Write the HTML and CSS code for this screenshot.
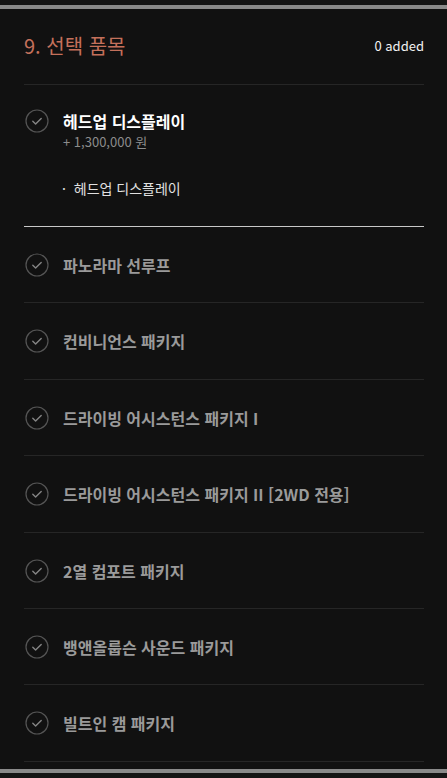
FILE: index.html
```html
<!DOCTYPE html>
<html lang="ko">
<head>
<meta charset="utf-8">
<link rel="stylesheet" href="styles.css">
</head>
<body>
<div class="page">
  <div class="bar-top"></div>
  <section class="panel">
    <header class="head">
      <h2 class="title">9. 선택 품목</h2>
      <span class="count">0 added</span>
    </header>
    <ul class="list">
      <li class="item open">
        <div class="row">
          <svg class="check" viewBox="0 0 24 24"><circle cx="12" cy="12" r="11" /><path d="M7.8 12.2l2.8 2.8 5.6-5.6" /></svg>
          <div class="info">
            <div class="name">헤드업 디스플레이</div>
            <div class="price">+ 1,300,000 원</div>
          </div>
        </div>
        <div class="sub">·&nbsp; 헤드업 디스플레이</div>
      </li>
      <li class="item">
        <div class="row"><svg class="check" viewBox="0 0 24 24"><circle cx="12" cy="12" r="11" /><path d="M7.8 12.2l2.8 2.8 5.6-5.6" /></svg><div class="name dim">파노라마 선루프</div></div>
      </li>
      <li class="item">
        <div class="row"><svg class="check" viewBox="0 0 24 24"><circle cx="12" cy="12" r="11" /><path d="M7.8 12.2l2.8 2.8 5.6-5.6" /></svg><div class="name dim">컨비니언스 패키지</div></div>
      </li>
      <li class="item">
        <div class="row"><svg class="check" viewBox="0 0 24 24"><circle cx="12" cy="12" r="11" /><path d="M7.8 12.2l2.8 2.8 5.6-5.6" /></svg><div class="name dim">드라이빙 어시스턴스 패키지 I</div></div>
      </li>
      <li class="item">
        <div class="row"><svg class="check" viewBox="0 0 24 24"><circle cx="12" cy="12" r="11" /><path d="M7.8 12.2l2.8 2.8 5.6-5.6" /></svg><div class="name dim">드라이빙 어시스턴스 패키지 II [2WD 전용]</div></div>
      </li>
      <li class="item">
        <div class="row"><svg class="check" viewBox="0 0 24 24"><circle cx="12" cy="12" r="11" /><path d="M7.8 12.2l2.8 2.8 5.6-5.6" /></svg><div class="name dim">2열 컴포트 패키지</div></div>
      </li>
      <li class="item">
        <div class="row"><svg class="check" viewBox="0 0 24 24"><circle cx="12" cy="12" r="11" /><path d="M7.8 12.2l2.8 2.8 5.6-5.6" /></svg><div class="name dim">뱅앤올룹슨 사운드 패키지</div></div>
      </li>
      <li class="item">
        <div class="row"><svg class="check" viewBox="0 0 24 24"><circle cx="12" cy="12" r="11" /><path d="M7.8 12.2l2.8 2.8 5.6-5.6" /></svg><div class="name dim">빌트인 캠 패키지</div></div>
      </li>
    </ul>
  </section>
  <div class="bar-bottom"></div>
</div>
</body>
</html>
```

FILE: styles.css
```css
* { box-sizing: border-box; }
html, body {
  margin: 0;
  padding: 0;
  background: #141414;
}
body {
  font-family: "Noto Sans CJK KR", "Noto Sans", sans-serif;
  color: #fff;
}
.page {
  width: 447px;
  height: 778px;
  overflow: hidden;
  display: flex;
  flex-direction: column;
}
.bar-top {
  height: 9px;
  border-top: 5px solid #151515;
  background: #8a8a8a;
  flex: none;
}
.bar-bottom {
  height: 9px;
  border-bottom: 5px solid #151515;
  background: #8a8a8a;
  flex: none;
}
.panel {
  flex: 1;
  background: #111111;
  padding: 0 23px 0 24px;
}
.head {
  height: 76px;
  display: flex;
  align-items: center;
  justify-content: space-between;
  border-bottom: 1px solid #262626;
  padding-bottom: 1px;
}
.title {
  margin: 0;
  font-size: 20px;
  font-weight: 400;
  color: #c4705b;
  line-height: 26px;
}
.count {
  font-size: 13px;
  color: #f2f2f2;
  margin-top: -1px;
}
.list {
  list-style: none;
  margin: 0;
  padding: 0;
}
.item {
  padding: 27px 0 26.4px;
  border-bottom: 1px solid #262626;
}
.item.open {
  padding: 25px 0 28px;
  border-bottom-color: #c8c8c8;
}
.row {
  display: flex;
  align-items: flex-start;
}
.check {
  width: 24px;
  height: 24px;
  flex: none;
  margin: -1px 14px -1px 1px;
  fill: none;
  stroke: #555555;
  stroke-width: 1.2;
}
.check path {
  stroke: #858585;
  stroke-width: 1.4;
  stroke-linecap: round;
  stroke-linejoin: round;
}
.name {
  font-size: 16px;
  font-weight: 700;
  line-height: 22px;
  color: #fff;
}
.name.dim {
  color: #9a9a9a;
}
.price {
  font-size: 13px;
  line-height: 20px;
  color: #8c8c8c;
}
.sub {
  margin: 26px 0 0 38px;
  font-size: 14px;
  line-height: 20px;
  color: #e0e0e0;
}
```
